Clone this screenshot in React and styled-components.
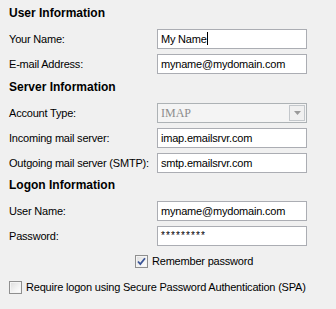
import React from 'react';
import styled, { createGlobalStyle } from 'styled-components';

const GlobalStyle = createGlobalStyle`
  html, body {
    margin: 0;
    padding: 0;
    background: #f0f0f0;
  }
  body {
    font-family: 'Liberation Sans', Arial, sans-serif;
    font-size: 11px;
    letter-spacing: -0.2px;
    color: #000;
  }
`;

const Panel = styled.div`
  width: 336px;
  height: 309px;
  box-sizing: border-box;
  padding: 6px 0 0 9px;
  background: #f0f0f0;
`;

const Heading = styled.div`
  font-weight: 700;
  font-size: 12px;
  letter-spacing: 0;
  line-height: 14px;
  height: 14px;
  margin-top: ${(p) => p.$top || 0}px;
  margin-bottom: 9px;
`;

const Rows = styled.div`
  display: grid;
  grid-template-columns: 148px 150px;
  row-gap: 5px;
`;

const Label = styled.div`
  height: 20px;
  line-height: 20px;
  white-space: nowrap;
`;

const Field = styled.div`
  box-sizing: border-box;
  height: 20px;
  border: 1px solid #abadb3;
  background: #fff;
  padding: 0 3px;
  line-height: 18px;
  white-space: nowrap;
  overflow: hidden;
  letter-spacing: ${(p) => (p.$secret ? '1.1px' : '-0.2px')};
  font-size: ${(p) => (p.$secret ? '10px' : '11px')};
`;

const Caret = styled.span`
  display: inline-block;
  width: 1px;
  height: 13px;
  background: #000;
  vertical-align: -2px;
`;

const Combo = styled.div`
  box-sizing: border-box;
  height: 20px;
  border: 1px solid #adb2b5;
  background: #f4f4f4;
  display: flex;
  align-items: stretch;
  padding: 1px;
`;

const ComboText = styled.div`
  flex: 1;
  color: #8d8d8d;
  padding-left: 2px;
  line-height: 16px;
  letter-spacing: 0;
  font-family: 'Liberation Serif', 'Times New Roman', serif;
  font-size: 12px;
`;

const ComboButton = styled.div`
  width: 16px;
  box-sizing: border-box;
  border: 1px solid #c3c7cb;
  background: #f0f0f0;
  display: flex;
  align-items: center;
  justify-content: center;
`;

const CheckRow = styled.label`
  display: flex;
  align-items: center;
  gap: 4px;
  height: 14px;
  margin-top: ${(p) => p.$top}px;
  margin-left: ${(p) => p.$left || 0}px;
  white-space: nowrap;
`;

const Box = styled.span`
  box-sizing: border-box;
  width: 13px;
  height: 13px;
  border: 1px solid #8f8f8f;
  background: linear-gradient(135deg, #dcdcdc 0%, #f4f4f4 60%, #ffffff 100%);
  box-shadow: inset 0 0 0 1px #f4f4f4;
  display: flex;
  align-items: center;
  justify-content: center;
`;

const Section = ({ title, top, children }) => (
  <>
    <Heading $top={top}>{title}</Heading>
    <Rows>{children}</Rows>
  </>
);

const Check = ({ checked }) => (
  <Box>
    {checked && (
      <svg width="9" height="9" viewBox="0 0 9 9">
        <path d="M1 4.5 L3.3 7 L8 1.2" fill="none" stroke="#3b5597" strokeWidth="1.8" />
      </svg>
    )}
  </Box>
);

export default function App() {
  return (
    <>
      <GlobalStyle />
      <Panel>
        <Section title="User Information">
          <Label>Your Name:</Label>
          <Field>
            My Name<Caret />
          </Field>
          <Label>E-mail Address:</Label>
          <Field>myname@mydomain.com</Field>
        </Section>

        <Section title="Server Information" top={6}>
          <Label>Account Type:</Label>
          <Combo>
            <ComboText>IMAP</ComboText>
            <ComboButton>
              <svg width="7" height="4" viewBox="0 0 7 4">
                <path d="M0 0 H7 L3.5 4 Z" fill="#9a9a9a" />
              </svg>
            </ComboButton>
          </Combo>
          <Label>Incoming mail server:</Label>
          <Field>imap.emailsrvr.com</Field>
          <Label>Outgoing mail server (SMTP):</Label>
          <Field>smtp.emailsrvr.com</Field>
        </Section>

        <Section title="Logon Information" top={5}>
          <Label>User Name:</Label>
          <Field>myname@mydomain.com</Field>
          <Label>Password:</Label>
          <Field $secret>*********</Field>
        </Section>

        <CheckRow $top={8} $left={126}>
          <Check checked />
          Remember password
        </CheckRow>
        <CheckRow $top={12}>
          <Check />
          Require logon using Secure Password Authentication (SPA)
        </CheckRow>
      </Panel>
    </>
  );
}
